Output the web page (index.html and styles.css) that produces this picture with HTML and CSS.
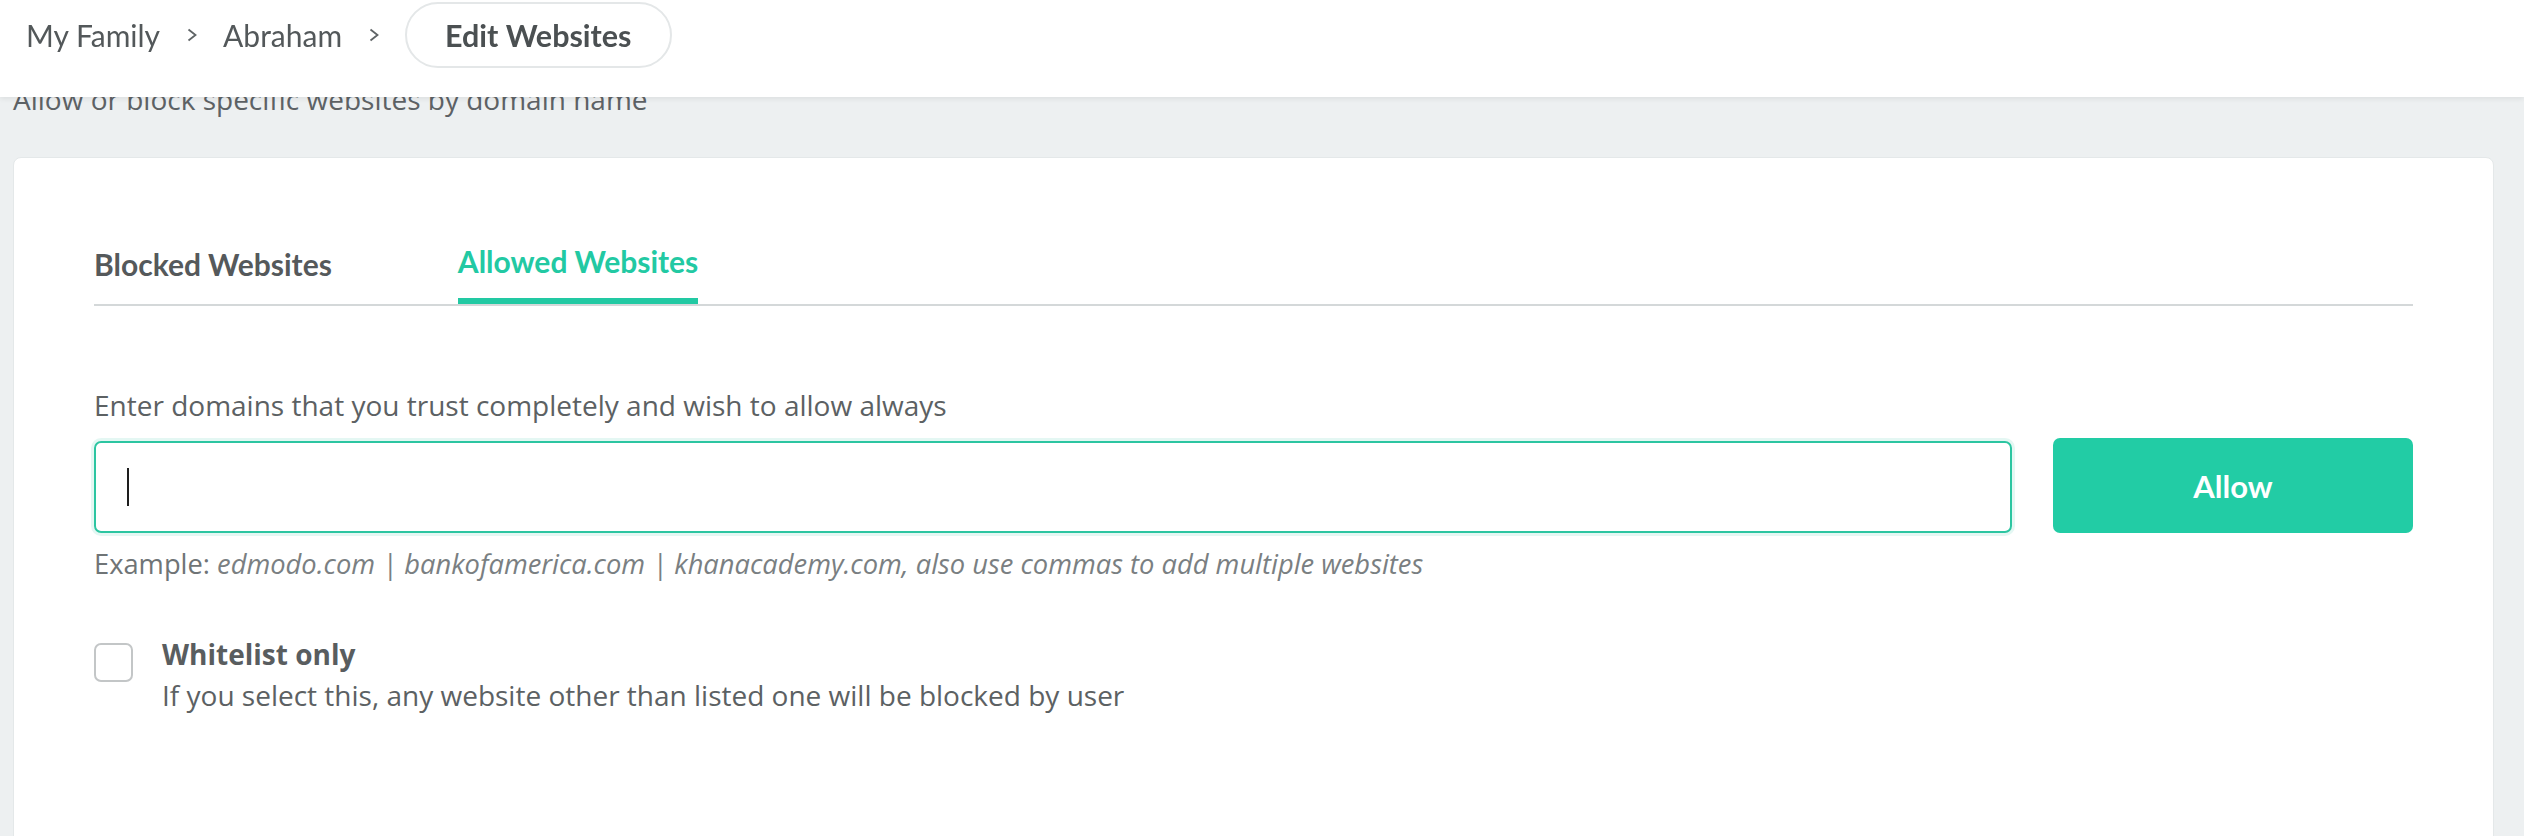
FILE: index.html
```html
<!DOCTYPE html>
<html lang="en">
<head>
<meta charset="utf-8">
<title>Edit Websites</title>
<link rel="stylesheet" href="styles.css">
</head>
<body>
<header class="topbar">
  <nav class="crumbs">
    <span class="crumb">My Family</span>
    <svg class="chev" width="10" height="14" viewBox="0 0 10 14"><polyline points="1.5,1.5 8.5,7 1.5,12.5" fill="none" stroke="#5f6466" stroke-width="1.8"/></svg>
    <span class="crumb">Abraham</span>
    <svg class="chev" width="10" height="14" viewBox="0 0 10 14"><polyline points="1.5,1.5 8.5,7 1.5,12.5" fill="none" stroke="#5f6466" stroke-width="1.8"/></svg>
    <span class="crumb-current">Edit Websites</span>
  </nav>
</header>
<main class="page">
  <p class="subtitle">Allow or block specific websites by domain name</p>
  <section class="card">
    <div class="tabs">
      <div class="tab">Blocked Websites</div>
      <div class="tab active">Allowed Websites</div>
    </div>
    <label class="field-label">Enter domains that you trust completely and wish to allow always</label>
    <div class="entry-row">
      <div class="domain-input"><span class="caret"></span></div>
      <button class="allow-btn">Allow</button>
    </div>
    <p class="hint">Example: <em>edmodo.com | bankofamerica.com | khanacademy.com, also use commas to add multiple websites</em></p>
    <div class="whitelist">
      <span class="checkbox"></span>
      <div class="wl-text">
        <div class="wl-title">Whitelist only</div>
        <div class="wl-desc">If you select this, any website other than listed one will be blocked by user</div>
      </div>
    </div>
  </section>
</main>
</body>
</html>
```
FILE: styles.css
```css
html, body {
  margin: 0;
  padding: 0;
}
body {
  background: #edf0f1;
  height: 836px;
  overflow: hidden;
  font-family: "Open Sans", "DejaVu Sans", sans-serif;
  color: #5c6163;
}
.topbar {
  position: fixed;
  top: 0;
  left: 0;
  right: 0;
  height: 97px;
  background: #ffffff;
  box-shadow: 0 2px 5px rgba(0, 0, 0, 0.07);
  z-index: 10;
}
.crumbs {
  display: flex;
  align-items: center;
  height: 66px;
  padding: 2px 0 0 26px;
  font-family: Lato, "Liberation Sans", sans-serif;
}
.crumb {
  font-size: 30px;
  color: #53585a;
}
.chev {
  margin: 0 26px 0 27px;
  flex: none;
}
.crumb-current {
  display: flex;
  align-items: center;
  box-sizing: border-box;
  height: 66px;
  padding: 0 38px;
  border: 2px solid #e4e7e8;
  border-radius: 33px;
  font-size: 30.5px;
  font-weight: 700;
  color: #4b5052;
}
.page {
  padding: 80px 30px 0 13px;
}
.subtitle {
  margin: 0;
  font-size: 28px;
  color: #5d6265;
}
.card {
  margin-top: 39px;
  min-height: 760px;
  background: #ffffff;
  border: 1px solid #e4e8e9;
  border-radius: 8px;
  padding: 85px 80px 0 80px;
}
.tabs {
  display: flex;
  align-items: flex-end;
  gap: 126px;
  border-bottom: 2px solid #d4d8d9;
  font-family: Lato, "Liberation Sans", sans-serif;
}
.tab {
  font-size: 30px;
  font-weight: 700;
  color: #55595b;
  padding-bottom: 22px;
}
.tab.active {
  color: #22c9a3;
  padding-bottom: 19px;
  border-bottom: 6px solid #22c9a3;
}
.field-label {
  display: block;
  margin-top: 80px;
  font-size: 28px;
  color: #5c6163;
}
.entry-row {
  display: flex;
  align-items: flex-end;
  gap: 41px;
  margin-top: 14px;
}
.domain-input {
  flex: 1;
  box-sizing: border-box;
  height: 92px;
  border: 2px solid #2cc5a1;
  border-radius: 7px;
  box-shadow: 0 0 0 3px rgba(44, 197, 161, 0.13);
  padding-left: 31px;
  display: flex;
  align-items: center;
}
.caret {
  width: 2px;
  height: 38px;
  background: #1e1e1e;
}
.allow-btn {
  flex: none;
  width: 360px;
  height: 95px;
  border: none;
  border-radius: 7px;
  background: #22cca5;
  color: #ffffff;
  font-family: Lato, "Liberation Sans", sans-serif;
  font-size: 31px;
  font-weight: 700;
}
.hint {
  margin: 12px 0 0 0;
  font-size: 27.3px;
  color: #6f7476;
}
.hint em {
  color: #7a7f82;
}
.whitelist {
  display: flex;
  align-items: flex-start;
  gap: 29px;
  margin-top: 52px;
}
.checkbox {
  flex: none;
  box-sizing: border-box;
  width: 39px;
  height: 39px;
  margin-top: 9px;
  border: 2px solid #c3c6c7;
  border-radius: 7px;
}
.wl-text {
  line-height: 41px;
  font-size: 28px;
}
.wl-title {
  font-weight: 700;
  color: #595d5f;
}
.wl-desc {
  color: #5c6163;
}
```
